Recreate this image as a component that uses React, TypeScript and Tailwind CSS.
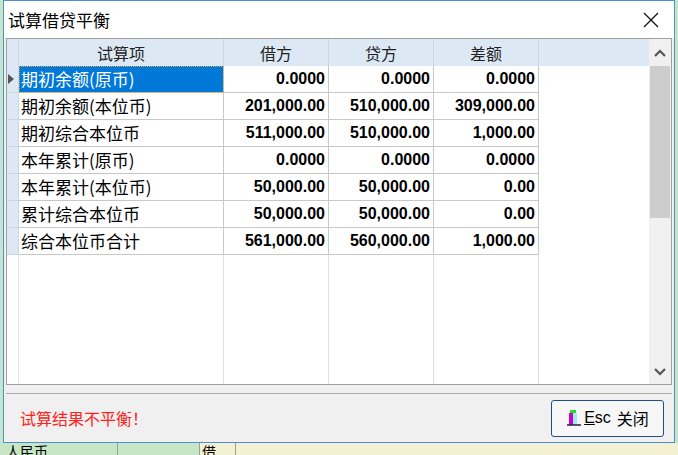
const rows = [
  ["期初余额(原币)", "0.0000", "0.0000", "0.0000"],
  ["期初余额(本位币)", "201,000.00", "510,000.00", "309,000.00"],
  ["期初综合本位币", "511,000.00", "510,000.00", "1,000.00"],
  ["本年累计(原币)", "0.0000", "0.0000", "0.0000"],
  ["本年累计(本位币)", "50,000.00", "50,000.00", "0.00"],
  ["累计综合本位币", "50,000.00", "50,000.00", "0.00"],
  ["综合本位币合计", "561,000.00", "560,000.00", "1,000.00"],
];

const font = { fontFamily: '"Microsoft YaHei", "Noto Sans CJK SC", sans-serif' };

export default function App() {
  return (
    <div className="relative h-[455px] w-[678px] overflow-hidden bg-[#c6e6c6]" style={font}>
      {/* background app strip */}
      <div className="absolute left-0 top-[443px] flex h-[12px] w-full bg-[#f4f1d2] text-[14px] leading-[16px] text-black">
        <div className="w-[118px] overflow-hidden border-r border-[#9c9c9c] bg-[#c6e6c6] pl-[6px]">人民币</div>
        <div className="w-[82px] border-r border-[#9c9c9c] bg-[#c6e6c6]" />
        <div className="w-[36px] overflow-hidden border-r border-[#9c9c9c] pl-[2px]">借</div>
      </div>
      <div className="absolute left-[3px] top-0 flex h-[443px] w-[672px] flex-col border border-[#4a90d9] bg-[#f0f0f0]">
        <div className="flex h-[37px] shrink-0 items-center justify-between bg-white pl-[4px] pr-[14px]">
          <span className="text-[17px] text-black">试算借贷平衡</span>
          <svg width="18" height="18" viewBox="0 0 18 18"><path d="M2 2L16 16M16 2L2 16" stroke="#111" strokeWidth="1.3" /></svg>
        </div>
        <div className="mx-[2px] flex h-[347px] border border-[#a0a0a0] bg-white">
          <div className="flex flex-1 flex-col">
            <div className="flex h-[27px] shrink-0 bg-[#dce8f4] text-[16px] text-[#222]">
              <div className="w-[12px] border-r border-[#c9d6e4]" />
              <div className="flex w-[205px] items-center justify-center border-r border-[#c9d6e4]">试算项</div>
              <div className="flex w-[105px] items-center justify-center border-r border-[#c9d6e4]">借方</div>
              <div className="flex w-[105px] items-center justify-center border-r border-[#c9d6e4]">贷方</div>
              <div className="flex w-[105px] items-center justify-center border-r border-[#c9d6e4]">差额</div>
            </div>
            {rows.map((r, i) => (
              <div key={i} className="flex h-[27px] shrink-0 text-[17px] text-black">
                <div className="flex w-[12px] items-center border-b border-r border-[#c9d6e4] bg-[#dce8f4]">
                  {i === 0 && <svg width="8" height="12" viewBox="0 0 8 12"><path d="M1 1L7 6L1 11Z" fill="#555" /></svg>}
                </div>
                <div className={`flex w-[205px] items-center border-b border-r border-[#c8c8c8] pl-[2px] ${i === 0 ? "bg-[#0078d7] text-white outline-1 outline-dotted outline-[#e8a040] -outline-offset-1" : ""}`}>{r[0]}</div>
                {r.slice(1).map((v, j) => (
                  <div key={j} className="flex w-[105px] items-center justify-end border-b border-r border-[#c8c8c8] pr-[3px] font-bold" style={{ fontFamily: '"Liberation Sans", sans-serif', fontSize: 16 }}>{v}</div>
                ))}
              </div>
            ))}
            <div className="flex flex-1">
              <div className="w-[12px] border-r border-[#e6e6e6]" />
              <div className="w-[205px] border-r border-[#e0e0e0]" />
              <div className="w-[105px] border-r border-[#e0e0e0]" />
              <div className="w-[105px] border-r border-[#e0e0e0]" />
              <div className="w-[105px] border-r border-[#e0e0e0]" />
            </div>
          </div>
          <div className="flex w-[22px] flex-col bg-[#f0f0f0]">
            <div className="flex h-[27px] items-center justify-center">
              <svg width="12" height="8" viewBox="0 0 12 8"><path d="M1 7L6 2L11 7" stroke="#555" strokeWidth="2.2" fill="none" /></svg>
            </div>
            <div className="mx-[1px] h-[152px] bg-[#cdcdcd]" />
            <div className="flex-1" />
            <div className="flex h-[24px] items-center justify-center">
              <svg width="12" height="8" viewBox="0 0 12 8"><path d="M1 1L6 6L11 1" stroke="#555" strokeWidth="2.2" fill="none" /></svg>
            </div>
          </div>
        </div>
        <div className="mx-[2px] mt-[8px] border-t border-[#a8a8a8]" />
        <div className="flex flex-1 items-center justify-between pl-[16px] pr-[10px]">
          <span className="text-[16px] text-[#ff2020]">试算结果不平衡！</span>
          <button className="flex h-[37px] w-[113px] items-center justify-center gap-[2px] rounded-[3px] border border-[#1e4f8c] bg-[#f7f7f7] text-[16px] text-black">
            <svg width="16" height="18" viewBox="0 0 16 18">
              <rect x="4" y="1" width="6" height="3" fill="#2d2" />
              <rect x="3" y="4" width="4" height="12" fill="#c0c" />
              <rect x="7" y="4" width="4" height="12" fill="#9ee" />
              <path d="M1 16H15" stroke="#224" strokeWidth="1.5" />
            </svg>
            <span style={{ fontFamily: '"Liberation Sans", sans-serif' }}><u>E</u>sc</span>
            <span className="ml-[4px]">关闭</span>
          </button>
        </div>
      </div>
    </div>
  );
}
